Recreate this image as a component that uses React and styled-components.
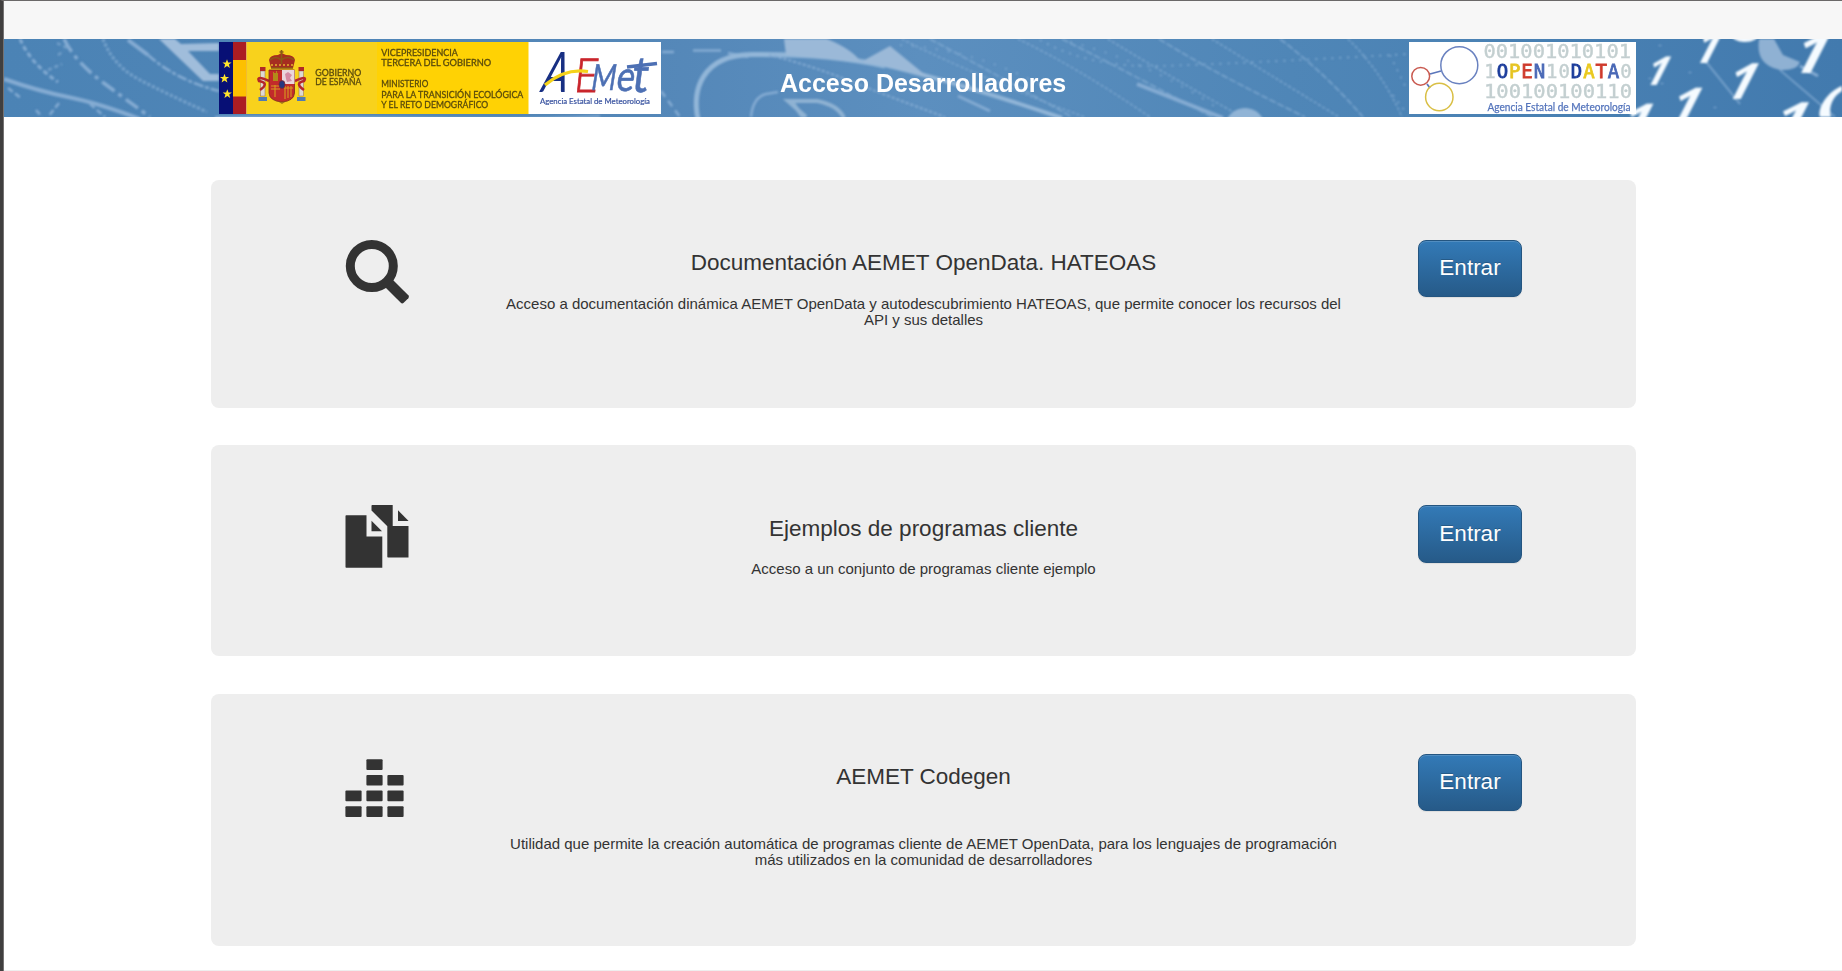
import React from "react";
import styled, { createGlobalStyle } from "styled-components";

const GlobalStyle = createGlobalStyle`
  *, *::before, *::after { box-sizing: border-box; }
  body {
    margin: 0;
    background: #fff;
    color: #333;
    font-family: "Liberation Sans", Arial, sans-serif;
    overflow: hidden;
  }
`;

const Page = styled.div`
  height: 971px;
  display: flex;
  flex-direction: column;
  border-left: 3px solid #403f3f;
  border-top: 1px solid #6b6969;
  overflow: hidden;
`;

const Body = styled.div`
  flex: 1;
  display: flex;
  flex-direction: column;
  border-left: 1px solid #757373;
`;

const TopBar = styled.div`
  height: 38px;
  flex: none;
  background: #f7f7f7;
`;

const Banner = styled.header`
  position: relative;
  height: 78px;
  flex: none;
  background: #4e85b6;
  overflow: hidden;
`;

const BannerArtwork = styled.svg`
  position: absolute;
  inset: 0;
  width: 1838px;
  height: 78px;
  display: block;
`;

const BannerContent = styled.div`
  position: relative;
  width: 1425px;
  height: 78px;
  margin-left: 207px;
  padding: 3px 0 0 8px;
  display: grid;
  grid-template-columns: 442px 1fr 227px;
`;

const Logo = styled.svg`
  display: block;
  height: 72px;
  width: ${(p) => p.$width}px;
`;

const Title = styled.h1`
  margin: 0;
  padding: 26px 0 0 119px;
  font-size: 25px;
  line-height: 30px;
  font-weight: 700;
  color: #fff;
  white-space: nowrap;
`;

const CardList = styled.main`
  width: 1425px;
  margin: 63px 0 0 207px;
  display: flex;
  flex-direction: column;
  flex: none;
`;

const Card = styled.section`
  height: ${(p) => p.$height}px;
  margin-bottom: ${(p) => p.$gap}px;
  padding: 60px 114px 0 134px;
  background: #eee;
  border-radius: 8px;
  display: grid;
  grid-template-columns: 158px 1fr 104px;
  align-items: start;
`;

const CardIcon = styled.svg`
  display: block;
  width: 66px;
  height: 66px;
  fill: #333;
`;

const CardText = styled.div`
  width: 841px;
  text-align: center;
`;

const CardTitle = styled.h3`
  margin: ${(p) => p.$top}px 0 0;
  font-size: 22.5px;
  line-height: 26px;
  font-weight: 400;
`;

const CardDescription = styled.p`
  margin: ${(p) => p.$top}px 0 0;
  font-size: 15px;
  line-height: 16px;
`;

const EnterButton = styled.button`
  width: 104px;
  height: ${(p) => p.$height}px;
  padding: 0 0 1px;
  border: 1px solid #245580;
  border-radius: 8px;
  background: linear-gradient(to bottom, #337ab7 0%, #265a88 100%);
  box-shadow: inset 0 1px 0 rgba(255, 255, 255, 0.15), 0 1px 1px rgba(0, 0, 0, 0.075);
  text-shadow: 0 -1px 0 rgba(0, 0, 0, 0.2);
  color: #fff;
  font-family: inherit;
  font-size: 22.5px;
  line-height: 30px;
`;

const Footer = styled.footer`
  margin-top: 24px;
  height: 1px;
  flex: none;
  background: #eee;
`;

const dottedTrails = [
  "M902 39 Q945 62 1060 108 L1085 117",
  "M930 39 Q975 63 1072 117",
  "M1018 39 Q1075 66 1150 117",
  "M1062 39 Q1120 68 1212 117",
  "M1108 39 Q1150 65 1242 117",
  "M1159 39 Q1212 72 1305 117",
  "M1212 39 Q1262 70 1339 117",
  "M1280 39 Q1325 73 1363 117",
  "M1348 39 Q1382 72 1402 117",
];

const fallingOnes = [
  [1640, 85, 40, 1],
  [1688, 63, 46, 1],
  [1719, 99, 50, 1.05],
  [1785, 73, 56, 1.1],
  [1663, 122, 48, 1.1],
  [1766, 138, 50, 1.2],
  [1614, 138, 48, 1.1],
];

function BannerArt() {
  return (
    <BannerArtwork viewBox="4 39 1838 78" aria-hidden="true">
      <defs>
        <linearGradient id="tone" x1="0" y1="0" x2="1" y2="0">
          <stop offset="0" stopColor="#4b83b5" />
          <stop offset=".35" stopColor="#5487b8" />
          <stop offset=".5" stopColor="#5c8fbf" />
          <stop offset=".7" stopColor="#4f86b7" />
          <stop offset="1" stopColor="#427aae" />
        </linearGradient>
        <filter id="soft" x="-5%" y="-20%" width="110%" height="140%">
          <feGaussianBlur stdDeviation="0.8" />
        </filter>
      </defs>
      <rect x="4" y="39" width="1838" height="78" fill="url(#tone)" />
      <g filter="url(#soft)" fill="none" stroke="#85acd3">
        <path d="M20 39 Q31 64 58 82" strokeWidth="3" strokeDasharray="5 3" />
        <path d="M64 39 Q75 62 105 84 T150 117" strokeWidth="3.5" strokeDasharray="15 5 4 5" />
        <path d="M103 39 Q113 66 140 80 T207 112" strokeWidth="3" strokeDasharray="3 2" opacity=".8" />
        <path d="M128 40 L148 55" strokeWidth="4" />
        <path d="M148 55 Q176 80 219 91" strokeWidth="2.5" strokeDasharray="10 2 4 2" />
        <path d="M57 43 L67 48 M58 55 L64 51 M48 70 L62 64" strokeWidth="2.5" strokeDasharray="4 3" opacity=".7" />
        <path d="M4 79 Q38 91 68 97 T140 119" strokeWidth="4" />
        <path d="M8 88 L22 99 M36 110 L42 117 M59 103 L48 117 M90 104 L105 117" strokeWidth="2.5" strokeDasharray="6 3" />
        <path d="M159 39 L175 39 L181 44 L219 43 L219 51 L188 51 L210 74 L219 74 L219 81 L203 81 Z" fill="#a0bddb" stroke="none" />
        <path d="M215 117 Q300 116 420 118 T600 116" strokeWidth="2" />
        <path d="M662 52 H674 M693 50.5 H721 M728 53 L748 57" strokeWidth="2.5" />
        <path d="M661 91 L680 117" strokeWidth="2.5" strokeDasharray="7 5" />
        <path d="M698 119 C692 91 701 55 752 54.5 C800 54 850 58 885 66" strokeWidth="5" stroke="#92b6d8" />
        <path d="M880 64 Q950 80 1062 118" strokeWidth="4" stroke="#92b6d8" />
        <path d="M784 39 H827 Q852 49 861 62 L786 55 Z M861 62 L890 46 L929 78 Q895 67 861 62 Z" fill="#9bb9d8" stroke="none" />
        <path d="M769 55 Q810 65 850 81 T945 117" strokeWidth="2" strokeDasharray="3 2" />
        <path d="M751 117 Q753 97 766 94 L778 92" strokeWidth="2.5" />
        <path d="M806 117 L788 101 H817 Q838 105 844 118 M792 102 L803 117" strokeWidth="4" stroke="#8fb2d3" />
        {dottedTrails.map((d, i) => (
          <path key={d} d={d} strokeWidth={1.6} strokeDasharray={i % 2 ? "7 2" : "3 2"} opacity=".8" />
        ))}
        <path d="M958 96 L990 111" strokeWidth="3" />
        <path d="M1137 84 L1223 118" strokeWidth="4" />
        <path d="M1040 40 Q1090 68 1160 66 T1410 54" strokeWidth="2" strokeDasharray="2 6" opacity=".8" />
        <path d="M900 45 Q980 50 1050 90 M1070 42 Q1150 62 1220 110" strokeWidth="2" strokeDasharray="2 10" opacity=".7" />
        <circle cx="1245" cy="128" r="20" fill="#91b4d6" stroke="none" />
        <path d="M1390 55 L1407 90 M1393 95 L1404 110" strokeWidth="2" strokeDasharray="2 6" opacity=".7" />
        <path d="M1703 58 L1740 104 M1780 70 L1835 117" strokeWidth="2" opacity=".7" />
        <path d="M1759 39 Q1755 65 1780 70 Q1797 71 1800 62 L1783 55 L1774 39 Z" fill="#8fb1d3" stroke="none" />
        <path d="M1800 66 L1818 76" strokeWidth="3" />
        <path d="M1650 78 v1 M1662 83 v1 M1691 92 v1 M1715 107 v1 M1690 72 v1 M1660 45 v1" strokeWidth="3" />
      </g>
      <g filter="url(#soft)" fill="#f5fbff" fontFamily="Open Sans, sans-serif" fontWeight="700">
        {fallingOnes.map(([x, y, size, stretch]) => (
          <text key={x} fontSize={size} transform={`translate(${x} ${y}) skewX(-27) scale(${stretch} 1)`}>1</text>
        ))}
        <ellipse cx="1745" cy="34" rx="14" ry="8" />
        <path d="M1842 86 C1828 91 1817 108 1820 117 H1831 C1828 107 1833 96 1842 91 Z" />
      </g>
    </BannerArtwork>
  );
}

function Star({ x, y }) {
  return (
    <path
      transform={`translate(${x} ${y})`}
      fill="#ffe52c"
      d="M0 -4.7 L1.2 -1.5 L4.6 -1.4 L1.9 .6 L2.9 4 L0 2 L-2.9 4 L-1.9 .6 L-4.6 -1.4 L-1.2 -1.5 Z"
    />
  );
}

function CoatOfArms() {
  return (
    <g>
      <g fill="#ddd8d4" stroke="#8c6a58" strokeWidth=".5">
        <rect x="260.5" y="71" width="4.5" height="25" />
        <rect x="299" y="71" width="4.5" height="25" />
      </g>
      <path d="M260 67 h5.5 v4 h-5.5z M298.500 67 h5.500 v4 h-5.500z" fill="#b02a26" />
      <path d="M258.500 97 h8.500 v4 h-8.500z M297 97 h8.500 v4 h-8.500z" fill="#517bb0" />
      <g fill="none" stroke="#b5262a" strokeWidth="2.6">
        <path d="M269 81 Q256 75 259 81 Q270 83 260 90" />
        <path d="M295 81 Q308 75 304 81 Q294 83 304 90" />
      </g>
      <path d="M269 70 H294.500 V93 Q294 101 282 102 Q269.500 101 269 93 Z" fill="#c22b2b" stroke="#7a2a1d" strokeWidth=".8" />
      <path d="M282 70 H294.500 V84 H282 Z" fill="#ead5dc" />
      <path d="M285 74 l3 -2 4 3 -2 3 2 3 -5 1 -1 -3z" fill="#d58aa4" />
      <path d="M273 74 v-2 h1 v1 h2 v-2 h1 v2 h1 v8 h-5z" fill="#b38b19" />
      <path d="M271 86 H281 M271 89 H280 M284 88 H293 M275 85 V97 M285 86 V99 M288 86 V98 M291 86 V97" stroke="#d79b20" strokeWidth="1.100" />
      <ellipse cx="282" cy="84.500" rx="3" ry="4" fill="#27377f" stroke="#8b2229" strokeWidth=".7" />
      <path d="M271 68 L269 60 Q270 55 278 55 L281.500 53 L286 55 Q294 55 295 60 L293 68 Z" fill="#a62d20" />
      <path d="M271 68 H293 M270 60 Q276 55 281 60 Q288 55 294 60 M281.500 50 V64 M279.500 52 H283.500" fill="none" stroke="#8a5a16" strokeWidth="1.600" />
      <path d="M271 65 H293" stroke="#e4b32d" strokeWidth="1.400" strokeDasharray="2 2" />
      <path d="M279 102 h6 l-3 2z" fill="#a47518" />
    </g>
  );
}

function InstitutionalLogo() {
  return (
    <Logo $width={442} viewBox="219 42 442 72" role="img" aria-label="Gobierno de España y AEMet">
      <rect x="219" y="42" width="442" height="72" fill="#fff" />
      <rect x="219" y="42" width="14" height="72" fill="#070f75" />
      <rect x="233" y="42" width="13.500" height="72" fill="#ab1d23" />
      <rect x="233" y="60" width="13.500" height="36.500" fill="#fdc000" />
      <rect x="246.500" y="42" width="131" height="72" fill="#f8d21c" />
      <rect x="377" y="42" width="151.500" height="72" fill="#ffd204" />
      <Star x={227} y={64} />
      <Star x={224.5} y={78.5} />
      <Star x={227.300} y={94} />
      <CoatOfArms />
      <g fontFamily="Lato, sans-serif" fill="#5a4b0c" stroke="#5a4b0c" strokeWidth=".3" fontSize="9.400">
        <text x="315.300" y="75.500" textLength="46" lengthAdjust="spacingAndGlyphs">GOBIERNO</text>
        <text x="315.300" y="85" textLength="46" lengthAdjust="spacingAndGlyphs">DE ESPAÑA</text>
        <text x="381.300" y="55.700" textLength="76.500" lengthAdjust="spacingAndGlyphs">VICEPRESIDENCIA</text>
        <text x="381.300" y="66" textLength="110" lengthAdjust="spacingAndGlyphs">TERCERA DEL GOBIERNO</text>
        <text x="381.300" y="87" textLength="47" lengthAdjust="spacingAndGlyphs">MINISTERIO</text>
        <text x="381.300" y="97.500" textLength="142" lengthAdjust="spacingAndGlyphs">PARA LA TRANSICIÓN ECOLÓGICA</text>
        <text x="381.300" y="108" textLength="107" lengthAdjust="spacingAndGlyphs">Y EL RETO DEMOGRÁFICO</text>
      </g>
      <g fontFamily="Lato, sans-serif">
        <text transform="translate(539 92) skewX(-15) scale(.68 1)" fontSize="56" fill="#182f83">A</text>
        <text transform="translate(573 91.500) skewX(-6) scale(.88 1)" fontSize="47" fontWeight="300" fill="#c9252c" stroke="#c9252c" strokeWidth=".8">E</text>
        <g fill="#4d70b4" stroke="#4d70b4" strokeWidth=".6">
          <text transform="translate(590 90) skewX(-9) scale(.74 1)" fontSize="36">M</text>
          <text transform="translate(615 91) skewX(-9) scale(.82 1)" fontSize="42">e</text>
          <text transform="translate(630.500 91.500) skewX(-7) scale(.9 1)" fontSize="50">t</text>
        </g>
        <path d="M627 67 Q640 65.500 657 63.500" fill="none" stroke="#4d70b4" strokeWidth="3.600" />
        <path d="M545 85 Q565 68 588 71.500" fill="none" stroke="#f5d21a" strokeWidth="3.200" />
        <text x="540" y="104" fontSize="8.300" fill="#37519f" stroke="#37519f" strokeWidth=".2" textLength="110" lengthAdjust="spacingAndGlyphs">Agencia Estatal de Meteorología</text>
      </g>
    </Logo>
  );
}

const codeLetters = [
  ["1"],
  ["O", "#1b3c9b"],
  ["P", "#e6c422"],
  ["E", "#cf3b2d"],
  ["N", "#4968b6"],
  ["1"],
  ["0"],
  ["D", "#1b3c9b"],
  ["A", "#eac91f"],
  ["T", "#cf3b2d"],
  ["A", "#4968b6"],
  ["0"],
];

function OpenDataLogo() {
  return (
    <Logo $width={227} viewBox="1409 42 227 72" role="img" aria-label="AEMET OpenData">
      <rect x="1409" y="42" width="227" height="72" fill="#fff" />
      <g fill="none" strokeWidth="1.500">
        <path d="M1430 74 L1441 71 M1427 84 L1430 88" stroke="#5b76bb" strokeWidth="1.800" />
        <circle cx="1459.300" cy="65.200" r="18.500" stroke="#6a82c0" />
        <circle cx="1420.700" cy="76.300" r="8.900" stroke="#c95a50" />
        <circle cx="1439.300" cy="97" r="13.700" stroke="#d9bf45" />
      </g>
      <g fontFamily="DejaVu Sans Mono, monospace" fontSize="19" fill="#c3cfd0" stroke="#c3cfd0" strokeWidth=".4">
        <text x="1483.500" y="58.200" textLength="147.500" lengthAdjust="spacingAndGlyphs">001001010101</text>
        <text x="1484" y="97.500" textLength="148" lengthAdjust="spacingAndGlyphs">100100100110</text>
        {codeLetters.map(([letter, color], i) => (
          <text
            key={i}
            x={1490 + i * 12.36}
            y="78.300"
            textAnchor="middle"
            fill={color || "#c3cfd0"}
            stroke={color || "#c3cfd0"}
            strokeWidth={color ? 0.8 : 0.4}
          >
            {letter}
          </text>
        ))}
      </g>
      <text x="1487.500" y="110.800" fontFamily="Lato, sans-serif" fontSize="11" fill="#5474bc" stroke="#5474bc" strokeWidth=".25" textLength="143" lengthAdjust="spacingAndGlyphs">Agencia Estatal de Meteorología</text>
    </Logo>
  );
}

function SearchIcon() {
  return (
    <CardIcon viewBox="345 240 66 66" aria-hidden="true">
      <circle cx="371.800" cy="266" r="21.500" fill="none" stroke="#333" strokeWidth="9" />
      <path d="M385.500 287.500 L393 280 L408.300 295.200 Q409.700 296.700 408.300 298.200 L403.700 302.800 Q402.200 304.200 400.800 302.800 Z" />
    </CardIcon>
  );
}

function DuplicateIcon() {
  return (
    <CardIcon viewBox="345 505 66 66" aria-hidden="true">
      <path d="M346.200 515.200 H366.500 V536.600 H382.300 V567.700 H346.200 Q345.500 567.700 345.500 567 V516 Q345.500 515.200 346.200 515.200 Z" />
      <path d="M371.500 520.800 L382 531.200 H371.500 Z" />
      <path d="M371.500 505.800 Q371.500 505 372.300 505 H392.700 V526 H408.500 V557.500 H388 Q387.300 557.500 387.300 556.800 V526.200 L371.500 510.600 Z" />
      <path d="M398 510.300 L408.600 521 H398 Z" />
    </CardIcon>
  );
}

const tiles = [
  [0, 2], [0, 3],
  [1, 0], [1, 1], [1, 2], [1, 3],
  [2, 1], [2, 2], [2, 3],
];

function EqualizerIcon() {
  return (
    <CardIcon viewBox="345 754 66 66" aria-hidden="true">
      {tiles.map(([col, row]) => (
        <rect key={`${col}-${row}`} x={345.4 + col * 21} y={759.2 + row * 15.7} width="16.200" height="10.700" rx="1" />
      ))}
    </CardIcon>
  );
}

const entries = [
  {
    icon: SearchIcon,
    title: "Documentación AEMET OpenData. HATEOAS",
    text: "Acceso a documentación dinámica AEMET OpenData y autodescubrimiento HATEOAS, que permite conocer los recursos del API y sus detalles",
    height: 228, gap: 37, titleTop: 10, textTop: 20, button: 57,
  },
  {
    icon: DuplicateIcon,
    title: "Ejemplos de programas cliente",
    text: "Acceso a un conjunto de programas cliente ejemplo",
    height: 211, gap: 38, titleTop: 11, textTop: 19, button: 58,
  },
  {
    icon: EqualizerIcon,
    title: "AEMET Codegen",
    text: "Utilidad que permite la creación automática de programas cliente de AEMET OpenData, para los lenguajes de programación más utilizados en la comunidad de desarrolladores",
    height: 252, gap: 0, titleTop: 10, textTop: 46, button: 57,
  },
];

export default function App() {
  return (
    <Page>
      <GlobalStyle />
      <Body>
        <TopBar />
        <Banner>
          <BannerArt />
          <BannerContent>
            <InstitutionalLogo />
            <Title>Acceso Desarrolladores</Title>
            <OpenDataLogo />
          </BannerContent>
        </Banner>
        <CardList>
          {entries.map(({ icon: Icon, ...entry }) => (
            <Card key={entry.title} $height={entry.height} $gap={entry.gap}>
              <Icon />
              <CardText>
                <CardTitle $top={entry.titleTop}>{entry.title}</CardTitle>
                <CardDescription $top={entry.textTop}>{entry.text}</CardDescription>
              </CardText>
              <EnterButton $height={entry.button}>Entrar</EnterButton>
            </Card>
          ))}
        </CardList>
        <Footer />
      </Body>
    </Page>
  );
}
